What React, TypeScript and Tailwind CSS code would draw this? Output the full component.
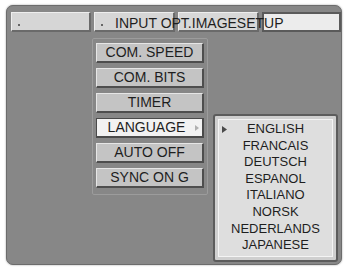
import React from "react";

const items = ["COM. SPEED", "COM. BITS", "TIMER", "LANGUAGE", "AUTO OFF", "SYNC ON G"];
const langs = ["ENGLISH", "FRANCAIS", "DEUTSCH", "ESPANOL", "ITALIANO", "NORSK", "NEDERLANDS", "JAPANESE"];

export default function App() {
  return (
    <div
      className="w-[346px] h-[267px] bg-white pt-[5px] pl-[6px]"
      style={{ fontFamily: '"Liberation Sans", Arial, sans-serif' }}
    >
      <div className="relative w-[336px] h-[260px] rounded-[7px] bg-[#878787] border border-[#6c6c6c] pt-[6px] pl-[4px] shadow-[0_0_2px_rgba(0,0,0,0.4)]">
        {/* tabs */}
        <div className="flex gap-[3px] h-[20px]">
          <div className="relative w-[80px] h-[20px] bg-[#d6d6d6] border-t border-l border-[#eeeeee] border-b-2 border-r-2 border-b-[#6a6a6a] border-r-[#6a6a6a]">
            <div className="absolute left-[6px] bottom-[4px] w-[2px] h-[2px] bg-[#666]" />
          </div>
          <div className="relative w-[81px] h-[20px] bg-[#d6d6d6] border-t border-l border-[#eeeeee] border-b-2 border-r-2 border-b-[#6a6a6a] border-r-[#6a6a6a]">
            <div className="absolute left-[6px] bottom-[4px] w-[2px] h-[2px] bg-[#666]" />
          </div>
          <div className="w-[81px] h-[20px] bg-[#d8d8d8] border-t border-l border-[#eeeeee] border-b-2 border-r-2 border-b-[#6a6a6a] border-r-[#6a6a6a]" />
          <div className="w-[79px] h-[20px] bg-[#ececec] border-2 border-[#5a5a5a]" />
        </div>
        <div className="absolute left-[108px] top-[9px] text-[14px] leading-[16px] text-[#1e1e1e] whitespace-nowrap">
          INPUT OPT.IMAGESETUP
        </div>

        <div className="flex mt-[6px]">
          {/* main menu */}
          <div className="ml-[81px] w-[116px] h-[157px] border border-[#9c9c9c] rounded-[2px] pt-[4px] pl-[3px] flex flex-col gap-[5px]">
            {items.map((t) => {
              const sel = t === "LANGUAGE";
              return (
                <div
                  key={t}
                  className={
                    sel
                      ? "relative w-[108px] h-[20px] bg-[#f2f2f2] border border-[#4a4a4a] border-b-2 border-r-2 flex items-center justify-center text-[14px] text-[#1e1e1e] pr-[6px]"
                      : "w-[108px] h-[20px] bg-[#c4c4c4] border-t border-l border-[#e6e6e6] border-b-2 border-r-2 border-b-[#4e4e4e] border-r-[#4e4e4e] flex items-center justify-center text-[14px] text-[#1e1e1e]"
                  }
                >
                  {t}
                  {sel && (
                    <svg className="absolute right-[3px] top-[6px]" width="4" height="6" viewBox="0 0 4 6">
                      <path d="M0 0 L4 3 L0 6 Z" fill="#b0b0b0" />
                    </svg>
                  )}
                </div>
              );
            })}
          </div>

          {/* submenu */}
          <div className="ml-[5px] mt-[76px] w-[125px] h-[148px] bg-[#cfcfcf] border-2 border-[#5c5c5c] rounded-[3px] p-[3px]">
            <div className="relative w-full h-full bg-[#dedede] border border-[#f4f4f4] pt-[1px] flex flex-col items-center text-[13px] leading-[16.6px] text-[#1e1e1e]">
              <svg className="absolute left-[3px] top-[6px]" width="5" height="7" viewBox="0 0 5 7">
                <path d="M0 0 L5 3.5 L0 7 Z" fill="#4a4a4a" />
              </svg>
              {langs.map((l) => (
                <div key={l}>{l}</div>
              ))}
            </div>
          </div>
        </div>
      </div>
    </div>
  );
}
